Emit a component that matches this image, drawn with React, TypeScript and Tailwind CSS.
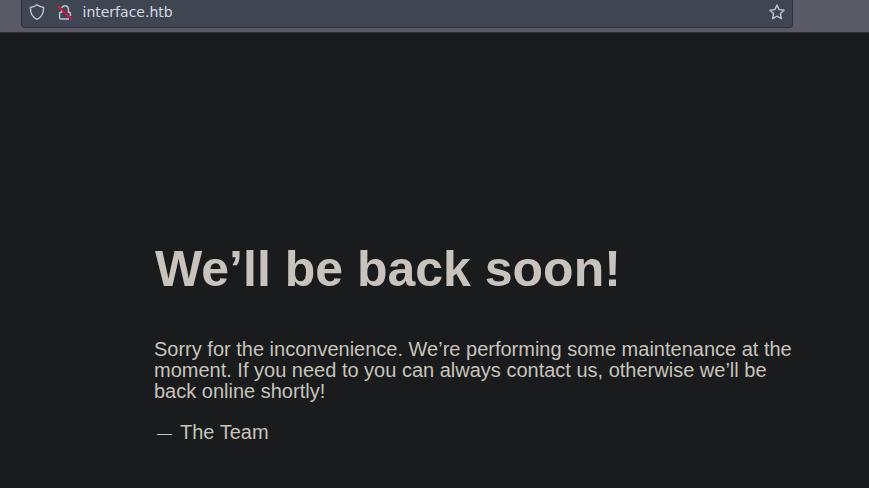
export default function App() {
  return (
    <div className="flex h-[488px] w-[869px] flex-col overflow-hidden bg-[#191b1c]">
      <header className="h-[33px] shrink-0 border-b border-[#2d2e38] bg-[#595a66] pl-[21px]">
        <div className="flex h-7 w-[772px] items-start rounded-b-[4px] border border-t-0 border-[#2e313d] bg-[#404552] pl-[7px] pr-[7px] pt-1 text-[#bfc4ce]">
          <svg className="size-4 shrink-0" viewBox="0 0 16 16" fill="none" stroke="currentColor" strokeWidth="1.4" strokeLinejoin="round">
            <path d="M8 .8C6.2 2.3 3.8 3.1 1.4 3.5C1.3 9 3.2 13 8 15.3C12.8 13 14.7 9 14.6 3.5C12.2 3.1 9.8 2.3 8 .8Z" />
          </svg>
          <svg className="ml-3 size-4 shrink-0" viewBox="0 0 16 16" fill="none" stroke="currentColor" strokeWidth="1.4" strokeLinecap="butt">
            <path d="M4.7 4A3.5 3.5 0 0 1 11.4 4.5V8.3H12.2Q13.4 8.3 13.4 9.5V12" />
            <path d="M4.5 6.3V8.3H3.8Q2.6 8.3 2.6 9.5V13.8Q2.6 15 3.8 15H12" />
            <path d="M1.1 2L14.6 15.6" stroke="#f00c45" strokeWidth="1.6" />
          </svg>
          <span className="ml-[9.5px] font-['DejaVu_Sans',sans-serif] text-[14px] leading-4 text-[#d3dae3]">interface.htb</span>
          <svg className="ml-auto size-4 shrink-0" viewBox="0 0 16 16" fill="none" stroke="currentColor" strokeWidth="1.4" strokeLinejoin="round">
            <path d="M8 1l2.1 4.6 5 .6-3.7 3.4 1 5L8 12.1l-4.4 2.5 1-5L.9 6.2l5-.6z" />
          </svg>
        </div>
      </header>
      <main className="flex-1 pl-[154px] pt-[207px] font-['Liberation_Sans',Arial,sans-serif] text-[#c8c3bc]">
        <h1 className="pl-px text-[50px] font-bold leading-[58px]">We’ll be back soon!</h1>
        <p className="mt-[41px] w-[650px] text-[20px] leading-[21px]">Sorry for the inconvenience. We’re performing some maintenance at the moment. If you need to you can always contact us, otherwise we’ll be back online shortly!</p>
        <p className="mt-5 flex text-[20px] leading-[21px]">
          <span className="w-[26px] pl-[3px] text-[15px]">—</span>
          <span>The Team</span>
        </p>
      </main>
    </div>
  );
}
